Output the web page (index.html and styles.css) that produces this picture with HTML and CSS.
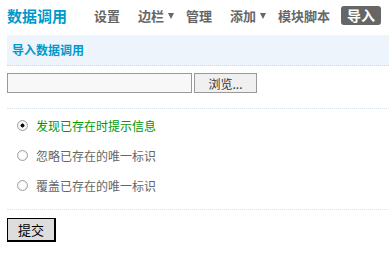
FILE: index.html
```html
<!DOCTYPE html>
<html lang="zh-CN">
<head>
    <meta charset="UTF-8">
    <title>数据调用</title>
    <link rel="stylesheet" href="styles.css">
</head>
<body>
    <div class="topbar">
        <h1 class="title">数据调用</h1>
        <ul class="nav">
            <li><a href="#">设置</a></li>
            <li class="drop"><a href="#">边栏<span class="arrow"></span></a></li>
            <li><a href="#">管理</a></li>
            <li class="drop"><a href="#">添加<span class="arrow"></span></a></li>
            <li><a href="#">模块脚本</a></li>
            <li><a href="#" class="current">导入</a></li>
        </ul>
    </div>

    <div class="caption">导入数据调用</div>

    <form class="import-form">
        <div class="filerow">
            <input type="text" class="filepath">
            <button type="button" class="browse">浏览...</button>
        </div>

        <div class="options">
            <label class="opt opt-on"><input type="radio" name="mode" checked> 发现已存在时提示信息</label>
            <label class="opt"><input type="radio" name="mode"> 忽略已存在的唯一标识</label>
            <label class="opt"><input type="radio" name="mode"> 覆盖已存在的唯一标识</label>
        </div>

        <div class="actions">
            <button type="submit" class="submit">提交</button>
        </div>
    </form>
</body>
</html>
```

FILE: styles.css
```css
body {
    margin: 0 0 0 7px;
    font-family: "Noto Sans CJK SC", "DejaVu Sans", sans-serif;
    font-size: 12px;
    color: #666;
    background: #fff;
}

.topbar {
    display: flex;
    align-items: center;
    height: 30px;
    margin-bottom: 5px;
    white-space: nowrap;
}

.title {
    flex-shrink: 0;
    margin: 0;
    font-size: 15px;
    font-weight: bold;
    color: #0099cc;
}

.nav {
    display: flex;
    align-items: center;
    flex-shrink: 0;
    list-style: none;
    margin: 0 0 0 20px;
    padding: 0;
}

.nav li {
    flex-shrink: 0;
    margin-right: 4px;
}

.nav li.drop {
    margin-right: 0;
}

.nav a {
    display: block;
    padding: 0 7px;
    font-size: 13px;
    font-weight: bold;
    line-height: 19px;
    color: #666;
    text-decoration: none;
}

.nav li.drop a {
    padding-right: 5px;
}

/* little dropdown triangle */
.nav .arrow {
    display: inline-block;
    width: 0;
    height: 0;
    margin-left: 4px;
    border-left: 3px solid transparent;
    border-right: 3px solid transparent;
    border-top: 6px solid #666;
    vertical-align: 2px;
}

.nav a.current {
    padding: 0 6px;
    background: #666;
    color: #fff;
    border-radius: 3px;
    font-size: 14px;
    line-height: 19px;
}

.caption {
    height: 30px;
    line-height: 30px;
    padding-left: 5px;
    background: #edf4fb;
    border-bottom: 1px dotted #c8d8e6;
    font-size: 12px;
    font-weight: bold;
    color: #0099cc;
}

.filerow {
    display: flex;
    margin-top: 7px;
    padding-bottom: 15px;
    border-bottom: 1px dotted #d6e2ec;
}

.filepath {
    box-sizing: border-box;
    width: 185px;
    height: 20px;
    margin: 0;
    border: 1px solid #999;
    background: #f8f8f8;
}

.browse {
    box-sizing: border-box;
    width: 63px;
    height: 20px;
    margin: 0 0 0 2px;
    padding: 0;
    border: 1px solid #999;
    background: #f0f0f0;
    font-family: inherit;
    font-size: 12px;
    color: #333;
}

.options {
    padding: 1px 0 9px 10px;
    border-bottom: 1px dotted #d6e2ec;
}

.opt {
    display: flex;
    align-items: center;
    height: 30px;
    color: #666;
}

.opt-on {
    color: #090;
}

.opt input {
    appearance: none;
    box-sizing: border-box;
    width: 11px;
    height: 11px;
    margin: 0 8px 0 0;
    border: 1px solid #a0a0a0;
    border-radius: 50%;
    background: radial-gradient(circle, #fff 40%, #e6e6e6 100%);
}

.opt input:checked {
    background: radial-gradient(circle, #111 0, #111 28%, #fff 36%, #e6e6e6 100%);
}

.actions {
    padding-top: 8px;
}

.submit {
    box-sizing: border-box;
    width: 49px;
    height: 24px;
    padding: 0;
    border: 1px solid #000;
    border-right-width: 2px;
    border-bottom-width: 2px;
    background: #ddd;
    font-family: inherit;
    font-size: 13px;
    color: #000;
}
```
